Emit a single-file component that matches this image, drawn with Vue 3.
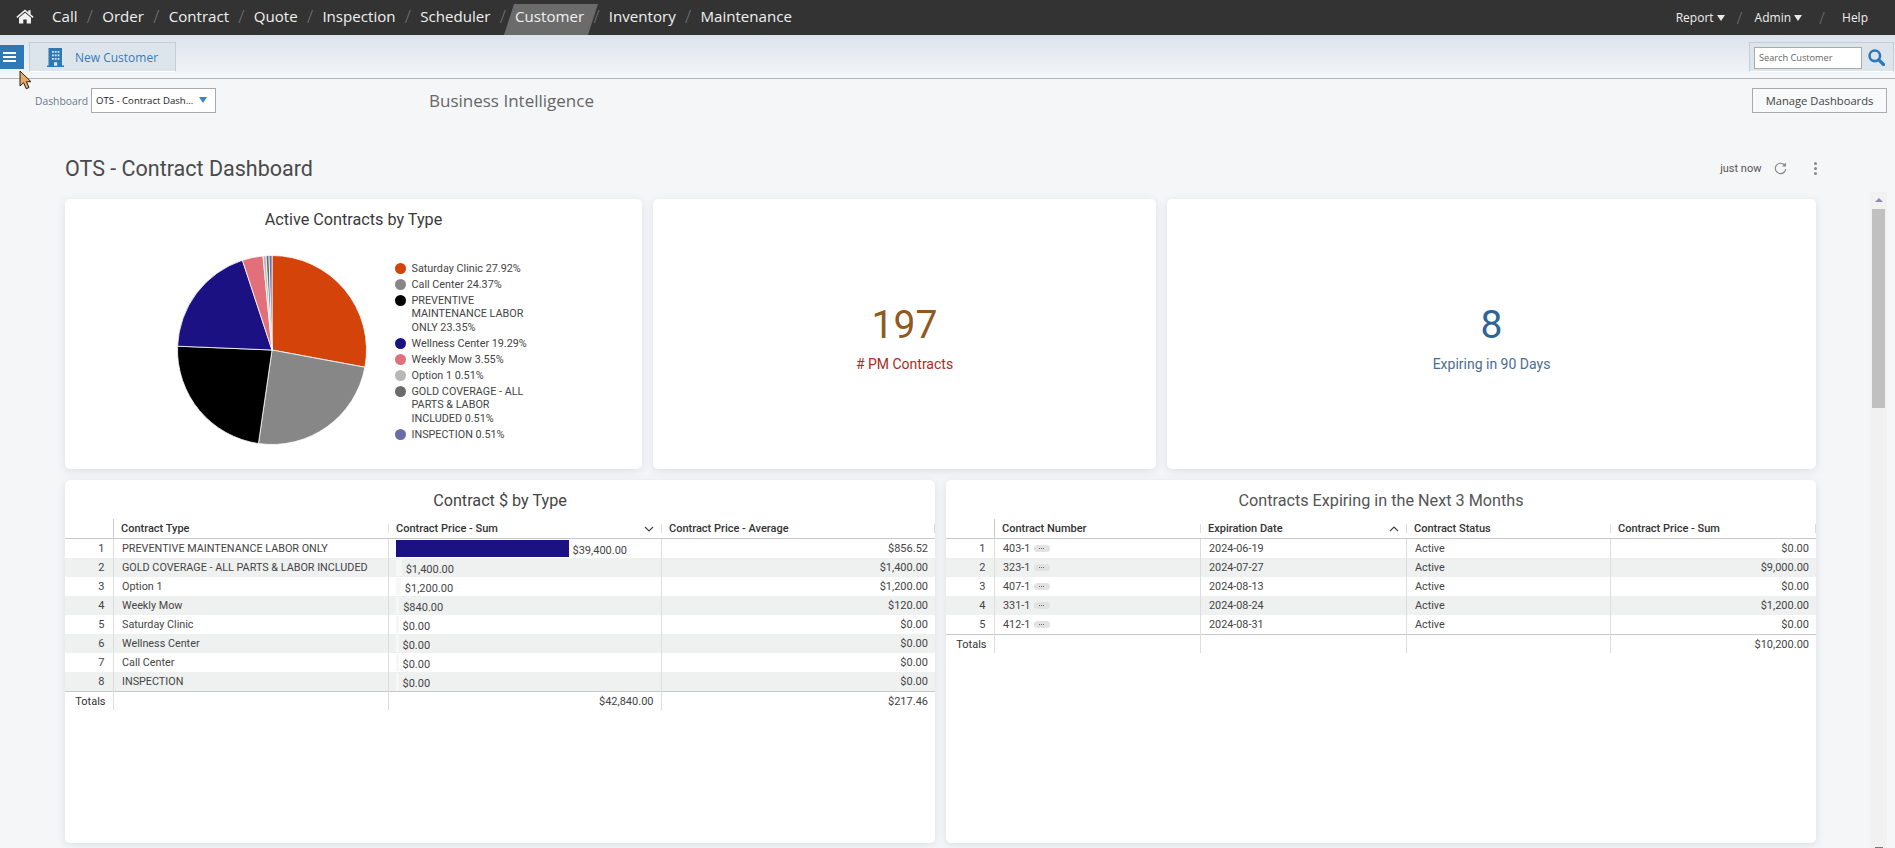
<script setup>
const navItems = ['Call', 'Order', 'Contract', 'Quote', 'Inspection', 'Scheduler', 'Customer', 'Inventory', 'Maintenance']

const slices = [
  { label: 'Saturday Clinic 27.92%', pct: 27.92, color: '#d4440a' },
  { label: 'Call Center 24.37%', pct: 24.37, color: '#878787' },
  { label: 'PREVENTIVE MAINTENANCE LABOR ONLY 23.35%', pct: 23.35, color: '#000000' },
  { label: 'Wellness Center 19.29%', pct: 19.29, color: '#1b1183' },
  { label: 'Weekly Mow 3.55%', pct: 3.55, color: '#e2707a' },
  { label: 'Option 1 0.51%', pct: 0.51, color: '#b8b8b8' },
  { label: 'GOLD COVERAGE - ALL PARTS & LABOR INCLUDED 0.51%', pct: 0.51, color: '#6b6b6b' },
  { label: 'INSPECTION 0.51%', pct: 0.51, color: '#6b6ba8' },
]

// build the pie paths, clockwise from 12 o'clock
function piePaths() {
  let start = 0
  return slices.map((s) => {
    const end = start + (s.pct / 100) * Math.PI * 2
    const x1 = 95 + 94.5 * Math.sin(start)
    const y1 = 95 - 94.5 * Math.cos(start)
    const x2 = 95 + 94.5 * Math.sin(end)
    const y2 = 95 - 94.5 * Math.cos(end)
    const large = end - start > Math.PI ? 1 : 0
    start = end
    return { color: s.color, d: `M95 95L${x1} ${y1}A94.5 94.5 0 ${large} 1 ${x2} ${y2}Z` }
  })
}
const paths = piePaths()

const typeRows = [
  { name: 'PREVENTIVE MAINTENANCE LABOR ONLY', sum: 39400, avg: '$856.52' },
  { name: 'GOLD COVERAGE - ALL PARTS & LABOR INCLUDED', sum: 1400, avg: '$1,400.00' },
  { name: 'Option 1', sum: 1200, avg: '$1,200.00' },
  { name: 'Weekly Mow', sum: 840, avg: '$120.00' },
  { name: 'Saturday Clinic', sum: 0, avg: '$0.00' },
  { name: 'Wellness Center', sum: 0, avg: '$0.00' },
  { name: 'Call Center', sum: 0, avg: '$0.00' },
  { name: 'INSPECTION', sum: 0, avg: '$0.00' },
]

const expiringRows = [
  { num: '403-1', date: '2024-06-19', price: '$0.00' },
  { num: '323-1', date: '2024-07-27', price: '$9,000.00' },
  { num: '407-1', date: '2024-08-13', price: '$0.00' },
  { num: '331-1', date: '2024-08-24', price: '$1,200.00' },
  { num: '412-1', date: '2024-08-31', price: '$0.00' },
]

function money(v) {
  return '$' + v.toLocaleString('en-US', { minimumFractionDigits: 2 })
}

function barWidth(v) {
  return Math.max(3, (v / 39400) * 173) + 'px'
}
</script>

<template>
  <div class="page">
    <header class="topbar">
      <svg class="home" viewBox="0 0 18 15" width="18" height="15">
        <path d="M9 0.6L0.4 7.7l1 1.2L9 2.6l7.6 6.3 1-1.2L14.6 5.2V1.2h-2.3v2.1z" fill="#f2f2f2" />
        <path d="M9 3.7L3 8.7V14.6h4.3v-4h3.4v4H15V8.7z" fill="#f2f2f2" />
      </svg>
      <nav class="nav">
        <template v-for="(item, i) in navItems" :key="item">
          <span v-if="i > 0" class="slash">/</span>
          <a class="nav-item" :class="{ active: item === 'Customer' }">{{ item }}</a>
        </template>
      </nav>
      <div class="nav-right">
        <a class="report">Report<i class="caret"></i></a>
        <span class="slash small">/</span>
        <a class="admin">Admin<i class="caret"></i></a>
        <span class="slash small wide">/</span>
        <a class="help">Help</a>
      </div>
    </header>

    <div class="toolbar">
      <button class="menu-btn">
        <span></span><span></span><span></span>
      </button>
      <div class="tab">
        <svg viewBox="0 0 17 19" width="17" height="19">
          <path d="M1.5 0H15v17.5h2V19H0v-1.500h1.500z" fill="#2f78b7" />
          <path d="M5 3h1.800v1.800H5zM7.800 3h1.800v1.800H7.800zM10.600 3h1.800v1.800h-1.800zM5 6.500h1.800v1.800H5zM7.800 6.500h1.800v1.800H7.800zM10.600 6.500h1.800v1.800h-1.800zM5 10h1.800v1.800H5zM7.800 10h1.800v1.800H7.800zM10.600 10h1.800v1.800h-1.800zM7 14.200h3.200v3.600H7z" fill="#dde5ec" />
        </svg>
        <span>New Customer</span>
      </div>
      <div class="search">
        <input class="search-input" placeholder="Search Customer" />
        <svg viewBox="0 0 17 17" width="17" height="17">
          <circle cx="6.800" cy="6.800" r="5.300" fill="none" stroke="#2f78b7" stroke-width="2.600" />
          <path d="M10.800 10.800L15.500 15.500" stroke="#2f78b7" stroke-width="3.200" stroke-linecap="round" />
        </svg>
      </div>
      <svg class="cursor" viewBox="0 0 13 20" width="13" height="20">
        <path d="M1 1v15l3.600-3.300 2.600 6 2.800-1.200-2.600-5.800H12z" fill="#e8a860" stroke="#222" stroke-width="1" />
      </svg>
    </div>

    <div class="subbar">
      <label class="dash-label">Dashboard</label>
      <div class="select">
        <span>OTS - Contract Dash...</span>
        <i class="select-caret"></i>
      </div>
      <div class="bi-title">Business Intelligence</div>
      <button class="manage">Manage Dashboards</button>
    </div>

    <div class="title-row">
      <h1>OTS - Contract Dashboard</h1>
      <span class="updated">just now</span>
      <svg class="refresh" viewBox="0 0 13 13" width="13" height="13">
        <path d="M10.600 3.200A5.200 5.200 0 1 0 11.700 7" fill="none" stroke="#8a8a8a" stroke-width="1.200" />
        <path d="M12 0.600V4.600H8z" fill="#8a8a8a" />
      </svg>
      <span class="dots"><i></i><i></i><i></i></span>
    </div>

    <div class="scroll-wrap">
      <main class="board">
        <section class="row-one">
          <div class="card pie-card">
            <h2>Active Contracts by Type</h2>
            <div class="pie-body">
              <svg class="pie" viewBox="0 0 190 190" width="190" height="190">
                <path
                  v-for="(p, i) in paths"
                  :key="i"
                  :d="p.d"
                  :fill="p.color"
                  stroke="#fff"
                  stroke-width="0.800"
                />
              </svg>
              <ul class="legend">
                <li v-for="s in slices" :key="s.label">
                  <i :style="{ background: s.color }"></i>
                  <span>{{ s.label }}</span>
                </li>
              </ul>
            </div>
          </div>
          <div class="card kpi kpi-pm">
            <div class="kpi-num">197</div>
            <div class="kpi-label"># PM Contracts</div>
          </div>
          <div class="card kpi kpi-exp">
            <div class="kpi-num">8</div>
            <div class="kpi-label">Expiring in 90 Days</div>
          </div>
        </section>

        <section class="row-two">
          <div class="card table-card">
            <h2>Contract $ by Type</h2>
            <table class="grid">
              <colgroup>
                <col style="width: 48px" /><col style="width: 275px" /><col style="width: 273px" /><col />
              </colgroup>
              <thead>
                <tr>
                  <th></th>
                  <th class="first">Contract Type</th>
                  <th>Contract Price - Sum
                    <svg class="chev" viewBox="0 0 10 6" width="10" height="6"><path d="M1 1l4 4 4-4" fill="none" stroke="#444" stroke-width="1.200" /></svg>
                  </th>
                  <th class="last">Contract Price - Average</th>
                </tr>
              </thead>
              <tbody>
                <tr v-for="(row, i) in typeRows" :key="row.name">
                  <td class="idx">{{ i + 1 }}</td>
                  <td>{{ row.name }}</td>
                  <td class="bar-cell">
                    <div class="bar-wrap">
                      <i class="bar" :class="{ full: row.sum > 2000 }" :style="{ width: barWidth(row.sum) }"></i>
                      <span>{{ money(row.sum) }}</span>
                    </div>
                  </td>
                  <td class="num">{{ row.avg }}</td>
                </tr>
              </tbody>
              <tfoot>
                <tr>
                  <td class="idx total">Totals</td>
                  <td></td>
                  <td class="num">$42,840.00</td>
                  <td class="num">$217.46</td>
                </tr>
              </tfoot>
            </table>
          </div>

          <div class="card table-card">
            <h2 class="lighter">Contracts Expiring in the Next 3 Months</h2>
            <table class="grid">
              <colgroup>
                <col style="width: 48px" /><col style="width: 206px" /><col style="width: 206px" /><col style="width: 204px" /><col />
              </colgroup>
              <thead>
                <tr>
                  <th></th>
                  <th class="first">Contract Number</th>
                  <th>Expiration Date
                    <svg class="chev" viewBox="0 0 10 6" width="10" height="6"><path d="M1 5l4-4 4 4" fill="none" stroke="#444" stroke-width="1.200" /></svg>
                  </th>
                  <th>Contract Status</th>
                  <th class="last">Contract Price - Sum</th>
                </tr>
              </thead>
              <tbody>
                <tr v-for="(row, i) in expiringRows" :key="row.num">
                  <td class="idx">{{ i + 1 }}</td>
                  <td>{{ row.num }} <span class="chip"><i></i><i></i><i></i></span></td>
                  <td>{{ row.date }}</td>
                  <td>Active</td>
                  <td class="num">{{ row.price }}</td>
                </tr>
              </tbody>
              <tfoot>
                <tr>
                  <td class="idx total">Totals</td>
                  <td></td>
                  <td></td>
                  <td></td>
                  <td class="num">$10,200.00</td>
                </tr>
              </tfoot>
            </table>
          </div>
        </section>
      </main>

      <div class="scrollbar">
        <i class="arrow"></i>
        <div class="thumb"></div>
        <i class="arrow-down"></i>
      </div>
    </div>
  </div>
</template>

<style>
html, body {
  margin: 0;
  overflow: hidden;
}
</style>

<style scoped>
.page {
  width: 1895px;
  height: 848px;
  overflow: hidden;
  background: #f5f6f8;
  font-family: 'Roboto', sans-serif;
  color: #444;
}

/* top nav */
.topbar {
  height: 35px;
  background: #333;
  display: flex;
  align-items: center;
  font-family: 'Open Sans', sans-serif;
  color: #f0f0f0;
}

.home {
  margin-left: 16px;
  margin-top: -3px;
}

.nav {
  display: flex;
  align-items: center;
  margin-left: 18px;
  margin-top: -3px;
  font-size: 15.100px;
}

.nav-item {
  position: relative;
  z-index: 0;
  white-space: nowrap;
}

.nav-item.active::before {
  content: '';
  position: absolute;
  z-index: -1;
  top: -2px;
  height: 31px;
  left: -6px;
  right: -9px;
  background: #6b6b6b;
  transform: skewX(-18deg);
}

.slash {
  width: 24.700px;
  text-align: center;
  color: #777;
  font-size: 18px;
  font-weight: 300;
}

.nav-right {
  margin-left: auto;
  display: flex;
  align-items: center;
  font-size: 12px;
  padding-right: 27px;
}

.slash.small {
  width: 30px;
  font-size: 16px;
}

.slash.small.wide {
  width: 40px;
}

.caret {
  display: inline-block;
  width: 0;
  height: 0;
  border-left: 4px solid transparent;
  border-right: 4px solid transparent;
  border-top: 6px solid #e8e8e8;
  margin-left: 3px;
  vertical-align: 1px;
}

/* toolbar */
.toolbar {
  position: relative;
  box-sizing: border-box;
  height: 44px;
  display: flex;
  align-items: flex-start;
  border-bottom: 1px solid #b4b4b4;
  background: linear-gradient(#dbe3eb, #f5f7f9);
}

.menu-btn {
  width: 24px;
  height: 24px;
  margin-top: 10px;
  padding: 0 0 0 3px;
  border: none;
  background: #2f78b7;
  display: flex;
  flex-direction: column;
  justify-content: center;
  align-items: flex-start;
  gap: 2.500px;
}

.menu-btn span {
  width: 13px;
  height: 1.500px;
  background: #fff;
}

.tab {
  box-sizing: border-box;
  width: 147px;
  height: 30px;
  margin-top: 7px;
  margin-left: 5px;
  padding-left: 17px;
  display: flex;
  align-items: center;
  gap: 11px;
  background: #dde5ec;
  border: 1px solid #c4cdd8;
  border-bottom-color: #fff;
  font-family: 'Open Sans', sans-serif;
  font-size: 12px;
  color: #3d7ab5;
}

.search {
  box-sizing: border-box;
  width: 145px;
  height: 30px;
  margin-top: 7px;
  margin-left: auto;
  margin-right: 1px;
  padding-left: 4px;
  display: flex;
  align-items: center;
  gap: 6px;
  background: #dde5ec;
  border: 1px solid #c4cdd8;
  border-bottom-color: #fff;
}

.search-input {
  box-sizing: border-box;
  width: 108px;
  height: 22px;
  margin-top: 1px;
  padding: 0 4px;
  border: 1px solid #aaa;
  background: #fff;
  font-family: 'Open Sans', sans-serif;
  font-size: 9.200px;
}

.search-input::placeholder {
  color: #666;
}

.cursor {
  position: absolute;
  left: 19px;
  top: 35px;
}

/* dashboard selector row */
.subbar {
  box-sizing: border-box;
  height: 66px;
  padding-top: 9px;
  display: flex;
  align-items: flex-start;
  font-family: 'Open Sans', sans-serif;
}

.dash-label {
  margin-left: 35px;
  width: 56px;
  line-height: 27px;
  font-size: 10.300px;
  color: #6a7a8a;
}

.select {
  box-sizing: border-box;
  width: 125px;
  height: 25px;
  padding: 0 8px 0 4px;
  display: flex;
  align-items: center;
  justify-content: space-between;
  background: #fff;
  border: 1px solid #aaa;
  font-size: 9.600px;
  color: #222;
  white-space: nowrap;
}

.select-caret {
  width: 0;
  height: 0;
  border-left: 4px solid transparent;
  border-right: 4px solid transparent;
  border-top: 6px solid #3a84c4;
  margin-top: -2px;
}

.bi-title {
  margin-left: 213px;
  line-height: 25px;
  font-size: 17px;
  color: #666;
}

.manage {
  box-sizing: border-box;
  width: 135px;
  height: 25px;
  margin-left: auto;
  margin-right: 8px;
  padding: 0;
  background: #f8f9fa;
  border: 1px solid #aaa;
  font-family: 'Open Sans', sans-serif;
  font-size: 11.200px;
  color: #444;
}

/* dashboard title */
.title-row {
  height: 47px;
  padding-left: 65px;
  padding-right: 78px;
  display: flex;
  align-items: center;
}

.title-row h1 {
  margin: 0 auto 0 0;
  font-size: 21.500px;
  font-weight: 400;
  color: #4a4a4a;
}

.updated {
  font-size: 11px;
  color: #555;
}

.refresh {
  margin-left: 12px;
}

.dots {
  margin-left: 27.500px;
  display: flex;
  flex-direction: column;
  gap: 2px;
}

.dots i {
  width: 3px;
  height: 3px;
  border-radius: 50%;
  background: #888;
}

/* board */
.scroll-wrap {
  display: flex;
  height: 656px;
}

.board {
  width: 1751px;
  margin-left: 65px;
  padding-top: 7px;
}

.row-one,
.row-two {
  display: flex;
  gap: 11px;
}

.row-one {
  height: 270px;
  margin-bottom: 11px;
}

.row-two {
  height: 363px;
}

.card {
  box-sizing: border-box;
  background: #fff;
  border-radius: 5px;
  box-shadow: 0 2px 8px rgba(60, 70, 90, 0.13);
}

.card h2 {
  margin: 0;
  text-align: center;
  font-weight: 400;
  font-size: 16.200px;
  color: #444;
}

.pie-card {
  width: 577px;
  padding-top: 12px;
}

.pie-card h2 {
  line-height: 18px;
  color: #3a3a3a;
}

.pie-body {
  display: flex;
  align-items: flex-start;
  padding-left: 111.500px;
  padding-top: 26px;
}

.legend {
  list-style: none;
  margin: 6.500px 0 0 28px;
  padding: 0;
  width: 136px;
  display: flex;
  flex-direction: column;
  gap: 2.500px;
  font-size: 10.800px;
  line-height: 13.500px;
  color: #444;
}

.legend li {
  display: flex;
  gap: 6px;
}

.legend i {
  flex: none;
  width: 11px;
  height: 11px;
  margin-top: 1px;
  border-radius: 50%;
}

.kpi {
  display: flex;
  flex-direction: column;
  align-items: center;
  padding-top: 102px;
}

.kpi-pm {
  width: 503px;
}

.kpi-exp {
  width: 649px;
}

.kpi-num {
  font-size: 39px;
  line-height: 48px;
}

.kpi-label {
  margin-top: 7px;
  font-size: 14px;
}

.kpi-pm .kpi-num {
  color: #8f5a1c;
}

.kpi-pm .kpi-label {
  color: #ad2a1c;
}

.kpi-exp .kpi-num {
  color: #2e6496;
}

.kpi-exp .kpi-label {
  color: #4a6d93;
}

.table-card {
  width: 870px;
  padding-top: 11px;
}

.table-card h2 {
  line-height: 20px;
  height: 28px;
}

.table-card h2.lighter {
  color: #555;
}

/* tables */
.grid {
  width: 100%;
  table-layout: fixed;
  border-collapse: collapse;
  font-size: 10.800px;
  color: #444;
}

.grid th {
  position: relative;
  height: 19px;
  padding: 0 0 0 8px;
  text-align: left;
  font-size: 11px;
  font-weight: 500;
  color: #333;
  border-bottom: 1px solid #c8c8c8;
}

.grid th + th::before {
  content: '';
  position: absolute;
  left: 0;
  top: 5px;
  width: 1px;
  height: 9px;
  background: #ddd;
}

.grid th.first::before {
  top: 0;
  height: 19px;
  background: #ccc;
}

.grid th.last::after {
  content: '';
  position: absolute;
  right: 0;
  top: 5px;
  width: 1px;
  height: 9px;
  background: #ddd;
}

.chev {
  position: absolute;
  right: 7px;
  top: 7px;
}

.grid td {
  height: 19px;
  padding: 0 0 0 8.500px;
  border-left: 1px solid #ddd;
  white-space: nowrap;
  overflow: hidden;
}

.grid td.idx {
  border-left: none;
  padding: 0 8px 0 0;
  text-align: right;
  font-size: 11px;
}

.grid td.num {
  padding: 0 7px 0 0;
  text-align: right;
  font-size: 11px;
}

.grid tbody tr:nth-child(even) td {
  background: #eff1f1;
}

.grid tfoot td {
  height: 18px;
  border-top: 1px solid #c8c8c8;
}

.grid td.total {
  padding-right: 7px;
  color: #333;
}

.grid td.bar-cell {
  padding-left: 7px;
  font-size: 11px;
}

.bar-wrap {
  display: flex;
  align-items: center;
  gap: 4px;
  height: 17px;
}

.bar-wrap span {
  margin-top: 3px;
}

.bar {
  height: 17px;
  background: #f7f7f7;
}

.bar.full {
  background: #1b1183;
}

.chip {
  display: inline-flex;
  justify-content: center;
  align-items: center;
  gap: 1px;
  width: 16px;
  height: 7px;
  margin-left: 1px;
  border-radius: 4px;
  background: #e2e2e2;
  vertical-align: 3px;
}

.chip i {
  width: 1px;
  height: 1px;
  background: #666;
}

/* scrollbar */
.scrollbar {
  box-sizing: border-box;
  position: relative;
  width: 17px;
  margin-left: 54px;
  padding-top: 17px;
  background: #f1f1f1;
}

.arrow {
  position: absolute;
  left: 5px;
  top: 6px;
  width: 0;
  height: 0;
  border-left: 4px solid transparent;
  border-right: 4px solid transparent;
  border-bottom: 4px solid #8f8ab0;
}

.thumb {
  width: 13px;
  height: 199px;
  margin-left: 2px;
  background: #c0c0c0;
}

.arrow-down {
  position: absolute;
  left: 5px;
  bottom: 0;
  width: 8px;
  height: 1px;
  background: #777;
}
</style>
